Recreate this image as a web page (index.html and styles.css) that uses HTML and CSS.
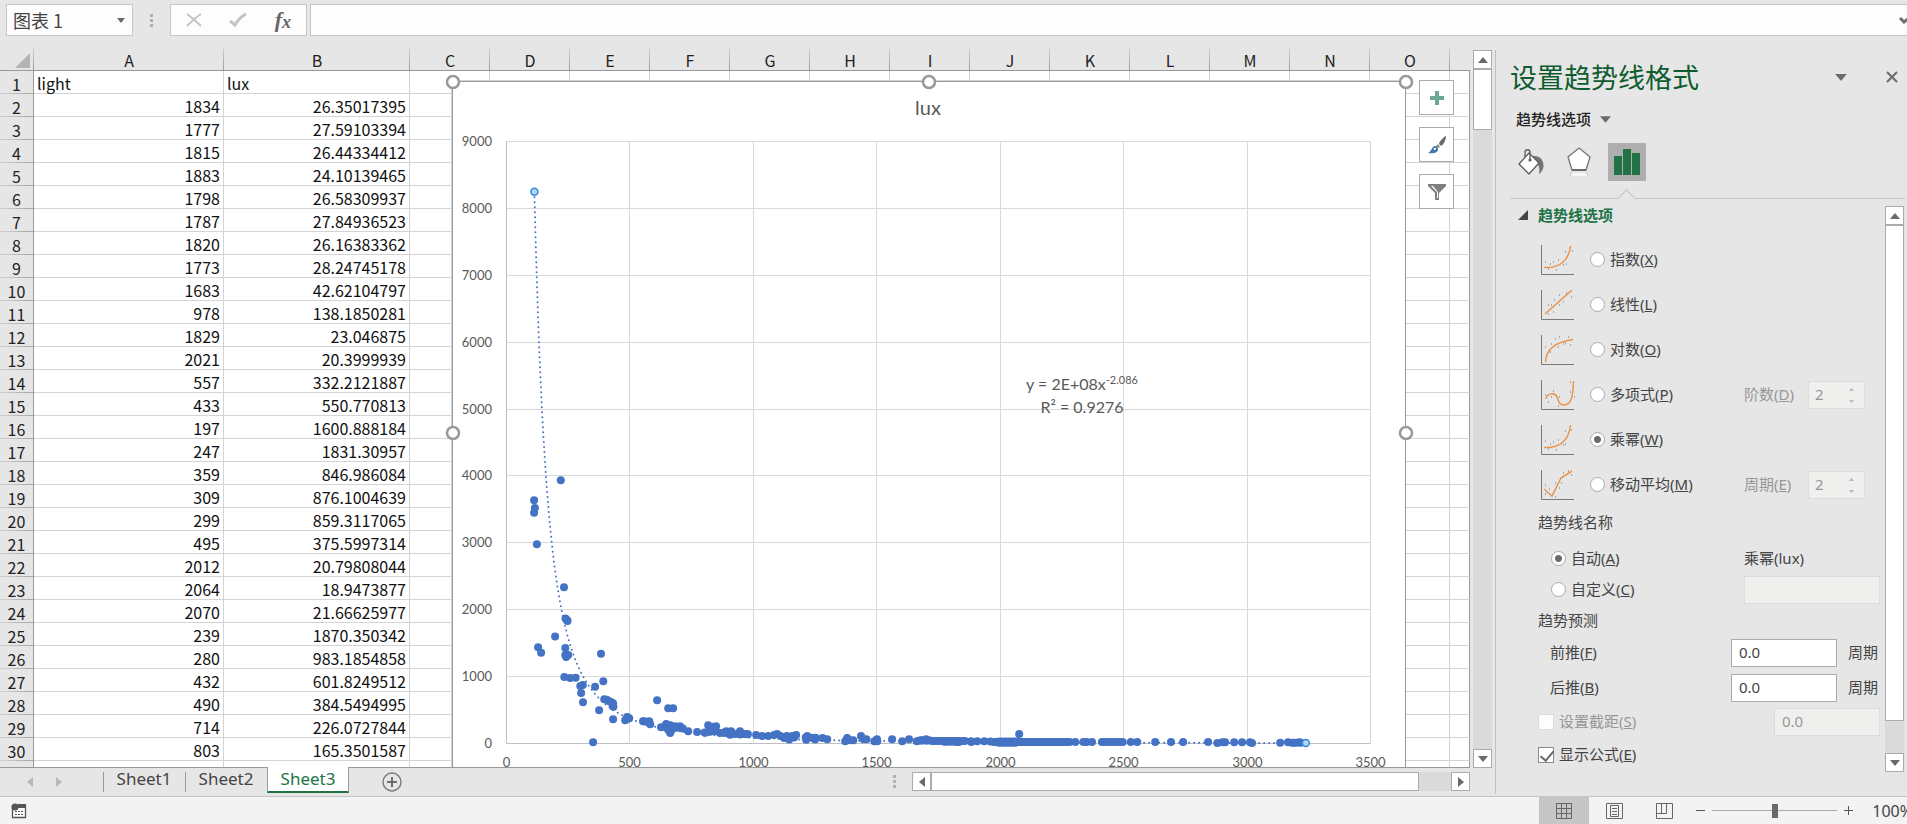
FILE: index.html
```html
<!DOCTYPE html>
<html lang="zh-CN">
<head>
<meta charset="utf-8">
<title>图表 1</title>
<link rel="stylesheet" href="styles.css">
</head>
<body>
<svg class="defs" aria-hidden="true">
  <symbol id="tri-up" viewBox="0 0 10 6"><path d="M5 0 10 6H0z"/></symbol>
  <symbol id="tri-down" viewBox="0 0 10 6"><path d="M0 0H10L5 6z"/></symbol>
  <symbol id="tri-left" viewBox="0 0 6 10"><path d="M6 0V10L0 5z"/></symbol>
  <symbol id="tri-right" viewBox="0 0 6 10"><path d="M0 0V10L6 5z"/></symbol>
</svg>

<header class="formula-bar">
  <div class="name-box">
    <input type="text" value="图表 1" aria-label="名称框">
    <button type="button" aria-label="名称列表"><svg width="8" height="5"><use href="#tri-down"/></svg></button>
  </div>
  <span class="grip"></span>
  <div class="formula-buttons">
    <button type="button" aria-label="取消"><svg width="16" height="14" viewBox="0 0 16 14"><path d="M1 1C5 4 11 9 15 13M15 1C10 4 5 9 1 13" fill="none" stroke="#c3c3c3" stroke-width="2"/></svg></button>
    <button type="button" aria-label="输入"><svg width="18" height="14" viewBox="0 0 18 14"><path d="M1 8 6 12C9 7 13 3 17 1" fill="none" stroke="#c3c3c3" stroke-width="3"/></svg></button>
    <button type="button" class="fx" aria-label="插入函数"><i>f</i><i class="fx-x">x</i></button>
  </div>
  <div class="formula-input">
    <input type="text" aria-label="编辑栏">
    <button type="button" aria-label="展开编辑栏"><svg width="11" height="7" viewBox="0 0 11 7"><path d="M1 1 5 5 10 1" fill="none" stroke="#6e6e6e" stroke-width="3"/></svg></button>
  </div>
</header>

<main class="main">
  <section class="workspace">
    <div class="sheet-area">
      <div class="sheet-view">
        <table class="grid">
          <colgroup id="cols"></colgroup>
          <thead><tr id="heads"></tr></thead>
          <tbody id="rows"></tbody>
        </table>
        <svg class="chart" id="chart" viewBox="0 0 954 700" width="954" height="700" role="img" aria-label="lux"></svg>
        <div class="chart-tools">
          <button type="button" aria-label="图表元素"><svg width="14" height="14" viewBox="0 0 14 14"><path d="M5 0H9V5H14V9H9V14H5V9H0V5H5z" fill="#6aa890"/></svg></button>
          <button type="button" aria-label="图表样式"><svg width="18" height="18" viewBox="0 0 18 18"><path d="M18 0C17 0 11 5 11 8L13 10C16 8 18 4 18 0z" fill="#6a6a6a"/><path d="M10 8 12 11 10 12 8 10z" fill="#8a8a8a"/><path d="M7 10C4 10 4 15 0 17C5 18 10 17 10 13C10 12 9 10 7 10z" fill="#4176ad"/><path d="M6 12C8 11 9 13 7 14C6 14 5 14 6 12z" fill="#fff"/></svg></button>
          <button type="button" aria-label="图表筛选器"><svg width="18" height="16" viewBox="0 0 18 16"><path d="M0 0H18V2L11 9V16H7V9L0 2z" fill="#7f7f7f"/><path d="M3 2H5L10 8V14H9V8z" fill="#fff"/></svg></button>
        </div>
      </div>
      <div class="scroll-v">
        <button type="button" aria-label="向上滚动"><svg width="10" height="6"><use href="#tri-up"/></svg></button>
        <span class="thumb"></span>
        <span class="track"></span>
        <button type="button" aria-label="向下滚动"><svg width="10" height="6"><use href="#tri-down"/></svg></button>
      </div>
    </div>
    <nav class="tab-strip">
      <div class="tab-nav">
        <button type="button" aria-label="上一个" disabled><svg width="6" height="10"><use href="#tri-left"/></svg></button>
        <button type="button" aria-label="下一个" disabled><svg width="6" height="10"><use href="#tri-right"/></svg></button>
      </div>
      <button type="button" class="tab">Sheet1</button>
      <button type="button" class="tab">Sheet2</button>
      <button type="button" class="tab active">Sheet3</button>
      <button type="button" class="tab-add" aria-label="新工作表"><svg width="20" height="20" viewBox="0 0 20 20"><circle cx="10" cy="10" r="9" fill="none" stroke="#7a7a7a" stroke-width="1.4"/><path d="M10 5V15M5 10H15" stroke="#6a6a6a" stroke-width="2"/></svg></button>
      <span class="grip tab-grip"></span>
      <div class="scroll-h">
        <button type="button" aria-label="向左滚动"><svg width="6" height="10"><use href="#tri-left"/></svg></button>
        <span class="thumb"></span>
        <span class="track"></span>
        <button type="button" aria-label="向右滚动"><svg width="6" height="10"><use href="#tri-right"/></svg></button>
      </div>
    </nav>
  </section>

  <aside class="pane">
    <div class="pane-title">
      <h2>设置趋势线格式</h2>
      <button type="button" aria-label="任务窗格选项"><svg width="12" height="7"><use href="#tri-down"/></svg></button>
      <button type="button" aria-label="关闭"><svg width="12" height="12" viewBox="0 0 12 12"><path d="M1 1 11 11M11 1 1 11" stroke="#6a6a6a" stroke-width="2"/></svg></button>
    </div>
    <button type="button" class="pane-menu">趋势线选项<svg width="11" height="7"><use href="#tri-down"/></svg></button>
    <div class="pane-tabs">
      <button type="button" aria-label="填充与线条"><svg width="26" height="26" viewBox="0 0 26 26"><path d="M15 7C23 6 27 13 25 20C24 22 22 25 21 25C22 20 21 15 18 14z" fill="#757575"/><path d="M11 4 21 14 11 25 1 15z" fill="#fff" stroke="#5c5c5c" stroke-width="1.3"/><path d="M7 8V3C7 0 12 0 12 3V10" fill="none" stroke="#5c5c5c" stroke-width="1.3"/><circle cx="12" cy="11" r="1.6" fill="#5c5c5c"/></svg></button>
      <button type="button" aria-label="效果"><svg width="26" height="30" viewBox="0 0 26 30"><path d="M13 1 24 10 20 23H6L2 10z" fill="#fff" stroke="#757575" stroke-width="1.3"/><path d="M6 23H20" stroke="#6a6a6a" stroke-width="2"/><path d="M6 26H20L22 29H4z" fill="#f8f8f8"/><path d="M6 25 4 29M20 25 22 29" stroke="#c8c8c8"/></svg></button>
      <button type="button" class="selected" aria-label="趋势线选项"><svg width="28" height="28" viewBox="0 0 28 28"><path d="M1 8H9V27H1zM10 1H18V27H10zM19 5H27V27H19z" fill="#217346"/></svg></button>
    </div>
    <div class="pane-body">
      <form class="options">
        <h3><svg width="10" height="10" viewBox="0 0 10 10"><path d="M10 0V10H0z"/></svg>趋势线选项</h3>
        <div class="types">
          <div class="type"><svg class="type-icon" viewBox="0 0 34 30"><path class="axis" d="M.5 0V29.500H33"/><path class="fit" d="M3 22.500C18 23.500 28 16 29.500 1"/><path class="dots" d="M4 17h1M9 19h1M12 17h1M17 15h1M7 24h1M15 25h1M22 20h1M25 19h1M24 7h1M31 6h1"/></svg><label><input type="radio" name="type">指数(<u>X</u>)</label></div>
          <div class="type"><svg class="type-icon" viewBox="0 0 34 30"><path class="axis" d="M.5 0V29.500H33"/><path class="fit" d="M4 24 31 0"/><path class="dots" d="M7 15h1M10 15h1M13 10h1M18 5h1M7 24h1M12 22h1M18 15h1M22 12h1M25 3h1M30 7h1"/></svg><label><input type="radio" name="type">线性(<u>L</u>)</label></div>
          <div class="type"><svg class="type-icon" viewBox="0 0 34 30"><path class="axis" d="M.5 0V29.500H33"/><path class="fit" d="M4.500 27C5 14 14 7 32 4.500"/><path class="dots" d="M4 12h1M10 9h1M14 4h1M18 2h1M27 2h1M9 17h1M17 12h1M22 9h1M24 8h1M29 10h1"/></svg><label><input type="radio" name="type">对数(<u>O</u>)</label></div>
          <div class="type"><svg class="type-icon" viewBox="0 0 34 30"><path class="axis" d="M.5 0V29.500H33"/><path class="fit" d="M5 19C6 13 14 12 16 17C18 23 19 25 23 25C31 25 32 15 32.500 1"/><path class="dots" d="M4 15h1M12 11h1M10 17h1M7 22h1M17 26h1M18 17h1M29 2h1M29 12h1M33 17h1"/></svg><label><input type="radio" name="type">多项式(<u>P</u>)</label>
            <div class="extra"><label for="order">阶数(<u>D</u>)</label><span class="spin"><input id="order" type="text" value="2" disabled><span class="spin-arrows"><svg width="5" height="3"><use href="#tri-up"/></svg><svg width="5" height="3"><use href="#tri-down"/></svg></span></span></div></div>
          <div class="type"><svg class="type-icon" viewBox="0 0 34 30"><path class="axis" d="M.5 0V29.500H33"/><path class="fit" d="M3 22.500C18 23.500 28 16 29.500 0"/><path class="dots" d="M4 16h1M9 19h1M12 17h1M17 15h1M7 24h1M15 25h1M22 20h1M24 19h1M24 6h1M30 5h1"/></svg><label><input type="radio" name="type" checked>乘幂(<u>W</u>)</label></div>
          <div class="type"><svg class="type-icon" viewBox="0 0 34 30"><path class="axis" d="M.5 0V29.500H33"/><path class="fit" d="M3 19 11 26 20 8 31 1"/><path class="dots" d="M4 15h1M4 24h1M8 19h1M14 27h1M14 13h1M20 13h1M18 18h1M22 3h1M27 1h1M30 5h1"/></svg><label><input type="radio" name="type">移动平均(<u>M</u>)</label>
            <div class="extra"><label for="period">周期(<u>E</u>)</label><span class="spin"><input id="period" type="text" value="2" disabled><span class="spin-arrows"><svg width="5" height="3"><use href="#tri-up"/></svg><svg width="5" height="3"><use href="#tri-down"/></svg></span></span></div></div>
        </div>
        <h4>趋势线名称</h4>
        <div class="names">
          <div class="line"><label><input type="radio" name="name" checked>自动(<u>A</u>)</label><span class="auto-name">乘幂(lux)</span></div>
          <div class="line"><label><input type="radio" name="name">自定义(<u>C</u>)</label><input class="field wide" type="text" aria-label="自定义名称" disabled></div>
        </div>
        <h4>趋势预测</h4>
        <div class="line forecast"><label for="fwd">前推(<u>F</u>)</label><input class="field" id="fwd" type="text" value="0.0"><span class="unit">周期</span></div>
        <div class="line forecast"><label for="back">后推(<u>B</u>)</label><input class="field" id="back" type="text" value="0.0"><span class="unit">周期</span></div>
        <div class="line check off"><label><input type="checkbox" disabled>设置截距(<u>S</u>)</label><input class="field" type="text" value="0.0" aria-label="截距" disabled></div>
        <div class="line check"><label><input type="checkbox" checked>显示公式(<u>E</u>)</label></div>
      </form>
      <div class="scroll-v pane-scroll">
        <button type="button" aria-label="向上滚动"><svg width="10" height="6"><use href="#tri-up"/></svg></button>
        <span class="thumb"></span>
        <span class="track"></span>
        <button type="button" aria-label="向下滚动"><svg width="10" height="6"><use href="#tri-down"/></svg></button>
      </div>
    </div>
  </aside>
</main>

<footer class="status">
  <button type="button" class="macro" aria-label="录制宏"><svg width="16" height="16" viewBox="0 0 16 16"><path d="M1.500 6V14.500H14.500V2" fill="#fff" stroke="#555" stroke-width="1.300"/><path d="M7 1H15V5H7z" fill="#555"/><circle cx="4" cy="4" r="3.600" fill="#555"/><path d="M4 8.500H13M4 11.500H13" stroke="#555" stroke-dasharray="2 1"/></svg></button>
  <div class="views">
    <button type="button" class="selected" aria-label="普通"><svg width="16" height="16" viewBox="0 0 16 16"><path d="M.5.5H15.500V15.500H.5zM5.500 0V16M10.500 0V16M0 5.500H16M0 10.500H16" fill="none" stroke="#666"/></svg></button>
    <button type="button" aria-label="页面布局"><svg width="17" height="16" viewBox="0 0 17 16"><path d="M.5.5H16.500V15.500H.5zM4.500 2.500H12.500V13.500H4.500zM6 5.500H11M6 8.500H11M6 11.500H11" fill="none" stroke="#666"/></svg></button>
    <button type="button" aria-label="分页预览"><svg width="17" height="16" viewBox="0 0 17 16"><path d="M.5.5H16.500V15.500H.5zM.5 10.500H10.500V0M5.500 0V10" fill="none" stroke="#666"/></svg></button>
  </div>
  <div class="zoom">
    <button type="button" aria-label="缩小"><svg width="9" height="9"><path d="M0 4.500H9" stroke="#555"/></svg></button>
    <input type="range" min="0" max="200" value="100" aria-label="显示比例">
    <button type="button" aria-label="放大"><svg width="9" height="9"><path d="M0 4.500H9M4.500 0V9" stroke="#555"/></svg></button>
    <span class="percent">100%</span>
  </div>
</footer>
<script src="app.js"></script>
</body>
</html>
```
FILE: styles.css
```css
* { box-sizing: border-box; }
body {
  margin: 0;
  height: 100vh;
  display: flex;
  flex-direction: column;
  overflow: hidden;
  background: #e6e6e6;
  color: #444;
  font: 15px/20px "Noto Sans", "Noto Sans CJK SC", sans-serif;
}
button {
  display: flex;
  align-items: center;
  justify-content: center;
  padding: 0;
  border: 0;
  background: none;
  color: inherit;
  font: inherit;
}
input { font: inherit; color: inherit; margin: 0; }
svg { fill: #6a6a6a; flex: none; }
.defs { display: none; }

/* formula bar */
.formula-bar {
  flex: none;
  display: flex;
  align-items: center;
  height: 48px;
  padding: 4px 0 12px 6px;
}
.name-box, .formula-buttons, .formula-input {
  display: flex;
  height: 32px;
  border: 1px solid #c6c6c6;
  background: #fdfdfd;
}
.name-box { width: 127px; }
.name-box input {
  flex: 1;
  min-width: 0;
  padding: 0 6px;
  border: 0;
  background: none;
  font: 18px/24px "Noto Sans CJK SC", sans-serif;
}
.name-box button { width: 22px; }
.grip {
  width: 3px;
  height: 13px;
  margin: 0 17px;
  background: repeating-linear-gradient(#b0b0b0 0 3px, transparent 3px 5px);
}
.formula-buttons { width: 137px; justify-content: space-between; padding: 0 15px; }
.formula-buttons .fx { color: #666; font: bold 22px/22px "Liberation Serif", serif; }
.fx-x { font-size: 18px; padding-top: 4px; }
.formula-input { flex: 1; margin-left: 3px; border-right: 0; overflow: hidden; }
.formula-input input { flex: 1; border: 0; background: none; padding: 0 6px; font-size: 16px; }
.formula-input button { width: 11px; margin-right: -3px; }

/* workspace */
.main { flex: 1; min-height: 0; display: flex; }
.workspace { flex: 1; min-width: 0; display: flex; flex-direction: column; }
.sheet-area { flex: 1; min-height: 0; display: flex; }
.sheet-view {
  flex: 1;
  min-width: 0;
  position: relative;
  overflow: hidden;
  border-bottom: 1px solid #999;
}
.grid {
  width: 100%;
  table-layout: fixed;
  border-collapse: separate;
  border-spacing: 0;
  background: #fff;
  color: #111;
  font: 16px/20px "Noto Sans CJK SC", sans-serif;
}
.col-row { width: 34px; }
.col-a { width: 190px; }
.col-b { width: 186px; }
.col-std { width: 80px; }
.grid th { background: #e6e6e6; color: #222; font-weight: 400; padding: 2px 0 0; }
.grid thead th {
  height: 23px;
  border-bottom: 1px solid #999;
  background: linear-gradient(#d2d2d2, #999) right / 1px 100% no-repeat #e6e6e6;
}
.grid thead th:last-child { background: #e6e6e6; }
.corner svg { display: block; margin: 0 4px 0 auto; fill: #b4b4b4; }
.grid tbody th {
  height: 23px;
  border-right: 1px solid #999;
  background: linear-gradient(90deg, #d2d2d2, #a4a4a4) bottom / 100% 1px no-repeat #e6e6e6;
}
.grid td {
  height: 23px;
  padding: 2px 3px 0;
  border-right: 1px solid #d4d4d4;
  border-bottom: 1px solid #d4d4d4;
  text-align: right;
  white-space: nowrap;
}
.grid td.text { text-align: left; }
.grid td:last-child { border-right-color: #999; }

.chart { position: absolute; left: 452px; top: 34px; overflow: visible; }
.chart text { font-family: Lato, sans-serif; font-size: 13px; fill: #595959; }
.chart .title { font-size: 20px; text-anchor: middle; }
.chart .formula { font-size: 16px; text-anchor: middle; }
.chart .power { font-size: 11px; }
.chart .y-label { text-anchor: end; }
.chart .x-label { text-anchor: middle; }
.chart .area { fill: #fff; stroke: #999; stroke-width: 1; }
.chart .halo { fill: none; stroke: #d4d4d4; }
.chart .gridline { stroke: #d9d9d9; fill: none; }
.chart .axisline { stroke: #bfbfbf; fill: none; }
.chart .point { fill: #4472c4; }
.chart .trend { fill: none; stroke: #4472c4; stroke-width: 2; stroke-linecap: round; stroke-dasharray: 0 5; }
.chart .end { fill: #b5d6f0; stroke: #2b8ddb; stroke-width: 1.500; }
.chart .handle { fill: #fff; stroke: #999; stroke-width: 2.500; }

.chart-tools {
  position: absolute;
  left: 1419px;
  top: 32px;
  display: flex;
  flex-direction: column;
  gap: 12px;
}
.chart-tools button { width: 35px; height: 35px; border: 1px solid #ababab; background: #fff; }

.scroll-v { flex: none; width: 19px; margin: 2px 3px 0; display: flex; flex-direction: column; }
.scroll-v button, .scroll-h button { flex: none; width: 19px; height: 19px; border: 1px solid #ababab; background: #fff; }
.scroll-v .thumb { height: 61px; border: 1px solid #ababab; background: #fff; }
.scroll-v .track, .scroll-h .track { flex: 1; background: #dadada; }

/* sheet tabs */
.tab-strip { flex: none; display: flex; height: 28px; }
.tab-nav { width: 103px; display: flex; align-items: center; gap: 23px; padding-left: 27px; }
.tab-nav svg { fill: #b8b8b8; }
.tab {
  height: 26px;
  width: 82px;
  padding-bottom: 5px;
  font-size: 17px;
  line-height: 20px;
  background: linear-gradient(#999, #999) left 4px / 1px 20px no-repeat;
}
.tab.active {
  position: relative;
  margin-top: -1px;
  padding-bottom: 1px;
  border: 1px solid #999;
  border-top: 0;
  border-bottom: 2px solid #217346;
  background: #fff;
  color: #217346;
}
.tab-add { width: 20px; margin-left: 33px; }
.tab-grip { margin: 7px 16px 0 auto; }
.scroll-h { display: flex; width: 558px; height: 19px; margin: 4px 25px 0 0; }
.scroll-h .thumb { width: 488px; border: 1px solid #ababab; background: #fff; }

/* task pane */
.pane {
  flex: none;
  width: 412px;
  margin: 2px 0;
  border-left: 1px solid #c0c0c0;
  display: flex;
  flex-direction: column;
}
.pane-title { display: flex; align-items: center; height: 56px; padding: 0 9px 2px 14px; gap: 39px; }
.pane-title h2 { flex: 1; margin: 0; color: #0e5c2f; font: 400 27px/36px "Noto Sans CJK SC", sans-serif; }
.pane-menu { align-self: flex-start; height: 26px; margin-left: 20px; gap: 9px; font-weight: 500; color: #222; }
.pane-tabs {
  position: relative;
  display: flex;
  align-items: center;
  height: 67px;
  margin: 0 2px 0 14px;
  padding: 0 0 6px 2px;
  gap: 10px;
  border-bottom: 1px solid #c6c6c6;
}
.pane-tabs button { width: 38px; height: 38px; }
.pane-tabs .selected { background: #aeaeae; }
.pane-tabs::after {
  content: "";
  position: absolute;
  left: 110px;
  bottom: -7px;
  width: 12px;
  height: 12px;
  border: solid #c6c6c6;
  border-width: 1px 0 0 1px;
  background: linear-gradient(135deg, #e6e6e6 50%, transparent 50%);
  transform: rotate(45deg);
}
.pane-body { flex: 1; min-height: 0; display: flex; }
.pane-scroll { margin: 7px 3px 22px 5px; }
.pane-scroll .thumb { flex: 497; }
.pane-scroll .track { flex: 32; }
.options { flex: 1; min-width: 0; padding-left: 22px; }
.options h3, .options h4 { margin: 0; display: flex; align-items: center; font-size: 15px; line-height: 20px; }
.options h3 { height: 34px; padding-bottom: 2px; gap: 10px; color: #217346; font-weight: 700; }
.options h3 svg { fill: #444; }
.options h4 { height: 30px; padding-left: 20px; font-weight: 400; }
.options label { display: flex; align-items: center; padding-bottom: 2px; white-space: pre; }
.types { padding: 4px 0 0 23px; }
.type { position: relative; display: flex; align-items: center; height: 45px; gap: 15px; }
.type-icon { width: 34px; height: 30px; }
.axis { fill: none; stroke: #7a7a7a; }
.fit { fill: none; stroke: #e8954f; stroke-width: 1.500; }
.dots { fill: none; stroke: #6a6a6a; }
.extra { margin-left: auto; display: flex; align-items: center; width: 136px; color: #979797; }
.extra label { width: 64px; }
.spin { display: flex; width: 57px; height: 28px; border: 1px solid #dcdcdc; background: #efefed; }
.spin input { flex: 1; min-width: 0; padding: 0 6px 1px; border: 0; background: none; color: #979797; }
.spin-arrows { display: flex; flex-direction: column; justify-content: space-between; width: 15px; padding: 6px 6px 5px 0; }
.spin-arrows svg { fill: #b8b8b8; }

input[type="radio"], input[type="checkbox"] { appearance: none; flex: none; width: 15px; height: 15px; border: 1px solid #ababab; background: #fff; margin: 2px 5px 0 0; }
input[type="radio"] { border-radius: 50%; }
input[type="radio"]:checked { background: radial-gradient(circle, #6a6a6a 3px, #fff 4px); }
input[type="checkbox"] { width: 16px; height: 16px; }
input[type="checkbox"]:disabled { border-color: #dcdcdc; background: #fdfdfd; }
input[type="checkbox"]:checked { position: relative; border-color: #8a8a8a; }
input[type="checkbox"]:checked::after {
  content: "";
  position: absolute;
  left: 4px;
  top: 0;
  width: 6px;
  height: 11px;
  border: solid #6a6a6a;
  border-width: 0 2px 2px 0;
  transform: rotate(40deg);
}
.names { padding: 6px 0 0 13px; }
.line { display: flex; align-items: center; justify-content: space-between; height: 31px; padding-left: 20px; }
.auto-name { width: 136px; padding-bottom: 2px; }
.field { width: 106px; height: 28px; padding: 0 7px 2px; border: 1px solid #ababab; background: #fff; }
.field.wide { width: 136px; }
.field:disabled { border-color: #dcdcdc; background: #efefed; color: #979797; }
.forecast { height: 35px; padding-left: 32px; }
.forecast .field { margin-left: auto; }
.unit { width: 43px; padding: 0 0 2px 11px; }
.check { height: 33px; }
.off { color: #979797; }

/* status bar */
.status {
  flex: none;
  display: flex;
  justify-content: space-between;
  height: 28px;
  border-top: 1px solid #c6c6c6;
  background: #f3f3f3;
  overflow: hidden;
}
.macro { margin-left: 11px; }
.views { display: flex; margin-left: auto; }
.views button { width: 50px; }
.views .selected { background: #c6c6c6; }
.zoom { display: flex; align-items: center; gap: 7px; margin: 0 -6px 0 7px; }
.zoom input { appearance: none; width: 125px; height: 14px; background: linear-gradient(#ababab, #ababab) center / 100% 1px no-repeat; }
.zoom input::-webkit-slider-thumb { appearance: none; width: 6px; height: 14px; background: #6a6a6a; }
.percent { margin-left: 12px; font-size: 16px; }
```
FILE: app.js
```js
const sheet = [
  ["light", "lux"],
  ["1834", "26.35017395"], ["1777", "27.59103394"], ["1815", "26.44334412"],
  ["1883", "24.10139465"], ["1798", "26.58309937"], ["1787", "27.84936523"],
  ["1820", "26.16383362"], ["1773", "28.24745178"], ["1683", "42.62104797"],
  ["978", "138.1850281"], ["1829", "23.046875"], ["2021", "20.3999939"],
  ["557", "332.2121887"], ["433", "550.770813"], ["197", "1600.888184"],
  ["247", "1831.30957"], ["359", "846.986084"], ["309", "876.1004639"],
  ["299", "859.3117065"], ["495", "375.5997314"], ["2012", "20.79808044"],
  ["2064", "18.9473877"], ["2070", "21.66625977"], ["239", "1870.350342"],
  ["280", "983.1854858"], ["432", "601.8249512"], ["490", "384.5494995"],
  ["714", "226.0727844"], ["803", "165.3501587"], ["", ""]
];

const letters = "ABCDEFGHIJKLMNO".split("");
document.getElementById("cols").innerHTML =
  '<col class="col-row"><col class="col-a"><col class="col-b">' +
  '<col class="col-std">'.repeat(13) + "<col>";
document.getElementById("heads").innerHTML =
  '<th class="corner"><svg width="15" height="15" viewBox="0 0 15 15"><path d="M15 0V15H0z"/></svg></th>' +
  letters.map(l => `<th scope="col">${l}</th>`).join("") + "<th></th>";
document.getElementById("rows").innerHTML = sheet.map((r, i) =>
  `<tr><th scope="row">${r[0] ? i + 1 : ""}</th>` +
  r.map(v => `<td${i === 0 ? ' class="text"' : ""}>${v}</td>`).join("") +
  "<td></td>".repeat(14) + "</tr>").join("");

const samples = [
  [112,3638],[115,3519],[112,3449],[123,2980],[220,3937],[233,2337],
  [246,1844],[128,1440],[140,1356],[238,1426],[238,1321],[250,1321],[242,1291],
  [383,1341],[234,992],[258,977],[392,932],[302,753],[310,618],[396,663],
  [406,655],[417,632],[424,618],[432,558],[375,498],[432,364],[481,349],
  [489,394],[497,376],[553,334],[568,325],[578,334],[582,289],[610,648],
  [655,528],[675,528],[351,20],[626,244],[640,250],[647,290],[650,230],
  [663,274],[683,259],[690,235],[703,259],[711,229],[663,155],[656,200],
  [670,210],[736,184],[772,170],[805,160],[817,274],[833,249],[849,259],
  [825,175],[845,185],[865,155],[880,160],[890,184],[898,150],[910,184],
  [906,130],[926,140],[946,184],[946,135],[960,140],[973,140],
  [1011,125],[1035,110],[1060,110],[1084,125],[1096,140],[1110,110],
  [1125,80],[1136,110],[1145,60],[1157,110],[1165,90],[1173,125],[1214,55],[1212,90],
  [1218,110],[1237,85],[1250,60],[1252,85],[1280,80],[1299,65],[1372,35],
  [1380,80],[1392,50],[1405,50],[1436,110],[1446,65],[1458,65],[1490,35],
  [1501,65],[1502,35],[1562,65],[1603,35],[1631,65],[1662,35],[1674,45],
  [1683,50],[1700,65],[1700,40],[1716,45],[1882,35],[1907,35],[1935,33],[1960,32],
  [2077,140],[2304,22],[2337,22],[2350,22],[2372,22],[2529,22],[2555,22],
  [2628,22],[2692,22],[2741,22],[2842,22],[2880,8],[2900,20],[2911,20],
  [2948,20],[2980,20],[3012,20],[3020,6],[3134,10],[3166,20],[3181,12],
  [3190,10],[3201,12],[3212,18],[3218,12]
];
for (let v = 1725; v <= 1860; v += 12) samples.push([v, 36]);
for (let v = 1975; v <= 2285; v += 9) samples.push([v, 22]);
for (let v = 1995; v <= 2060; v += 13) samples.push([v, 30], [v, 12]);
for (let v = 2412; v <= 2505; v += 12) samples.push([v, 22]);
for (const r of sheet.slice(1)) if (r[0]) samples.push([+r[0], +r[1]]);

const left = 54.5, right = 918.5, top0 = 59.5, base = 661.5;
const px = v => left + v * (right - left) / 3500;
const py = v => base - v * (base - top0) / 9000;
let out = '<rect class="halo" x="-0.5" y="-1.5" width="954" height="740"/>' +
  '<rect class="area" x="0.5" y="-0.5" width="953" height="740"/>';
for (let v = 0; v <= 9000; v += 1000) {
  const y = Math.floor(py(v)) + 0.5;
  out += `<path class="${v ? "gridline" : "axisline"}" d="M${left} ${y}H${right}"/>` +
    `<text class="y-label" x="40" y="${Math.round(y) + 4}">${v}</text>`;
}
for (let v = 0; v <= 3500; v += 500) {
  const x = Math.floor(px(v)) + 0.5;
  out += `<path class="${v ? "gridline" : "axisline"}" d="M${x} ${top0}V${base}"/>` +
    `<text class="x-label" x="${x}" y="685">${v}</text>`;
}
let trend = "";
for (let v = 113; v <= 3238; v += 5) {
  trend += (trend ? "L" : "M") + px(v).toFixed(1) + " " + py(1.58e8 * Math.pow(v, -2.086)).toFixed(1);
}
out += `<path class="trend" d="${trend}"/>`;
out += samples.map(p => `<circle class="point" cx="${px(p[0]).toFixed(1)}" cy="${py(p[1]).toFixed(1)}" r="4"/>`).join("");
out += `<circle class="end" cx="${px(113)}" cy="${py(8249)}" r="3.500"/>`;
out += `<circle class="end" cx="${px(3238)}" cy="${py(7)}" r="3.500"/>`;
out += '<text class="title" x="476" y="33">lux</text>' +
  '<text class="formula" x="630" y="308">y = 2E+08x<tspan class="power" dy="-6">-2.086</tspan></text>' +
  '<text class="formula" x="630" y="331">R² = 0.9276</text>';
for (const [x, y] of [[1, 0], [477, 0], [954, 0], [1, 351], [954, 351]]) {
  out += `<circle class="handle" cx="${x}" cy="${y}" r="6"/>`;
}
document.getElementById("chart").innerHTML = out;
```
